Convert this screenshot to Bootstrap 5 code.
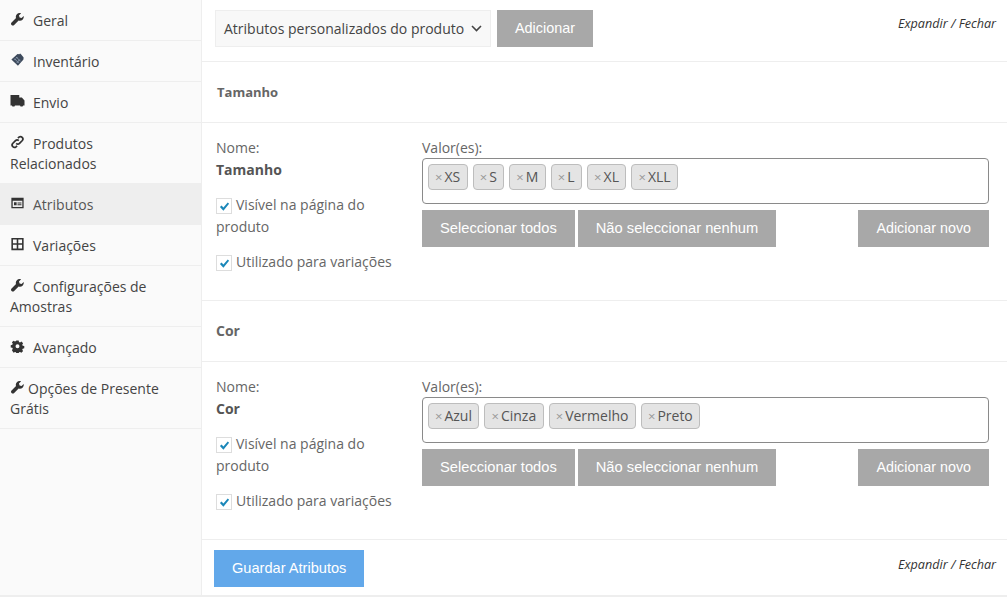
<!DOCTYPE html>
<html lang="pt">
<head>
<meta charset="utf-8">
<title>Atributos</title>
<link href="https://cdn.jsdelivr.net/npm/bootstrap@5.3.0/dist/css/bootstrap.min.css" rel="stylesheet">
<style>
html,body{height:100%;overflow:hidden}
body{font-family:"Open Sans",sans-serif;font-size:14px;line-height:20px;color:#555;background:#fff}
.shell{width:1007px;height:597px;border-bottom:2px solid #eee}
.side{width:202px;flex:none;background:#fafafa;border-right:1px solid #eee;height:595px}
.side-item{display:block;padding:11px 10px 9px;border-bottom:1px solid #eee;color:#444;text-decoration:none;line-height:20px}
.side-item.on{background:#eee;color:#555;border-bottom-color:#eee}
.side-item svg{width:15px;height:14px;margin:0 4px 0 0;vertical-align:0;fill:#333}
.side-item svg.wr{width:13px;height:13px;margin:0 5px 0 1px}
.side-item svg.wr-tight{margin-right:4px}
.tgap{margin-right:4px}
.main{flex:1;min-width:0}
.toolbar{height:62px;border-bottom:1px solid #eee;padding:10px 11px 0 13px}
.fake-select{width:276px;height:37px;background:#f8f8f8;border:1px solid #eee;padding:0 8px;color:#444;line-height:36px;margin-right:6px;font-size:14px}
.grey-btn,.blue-btn{border:0;border-radius:0;font-family:"Liberation Sans",sans-serif;font-size:14.6px;color:#fff;height:37px;padding:0 18px;line-height:37px}
.grey-btn{background:#a8a8a8}
.blue-btn{background:#62a8ea}
.grey-btn:hover{background:#a8a8a8;color:#fff}
.blue-btn:hover{background:#62a8ea;color:#fff}
.grey-btn.txt-add{font-size:14.4px}
.grey-btn.txt-sel{font-size:14.7px}
.grey-btn.txt-new{font-size:14.3px}
.exp{font-size:12.6px;font-style:italic;color:#333;line-height:16px;margin-top:6px}
.exp.low{margin-top:7px}
.attr-head{height:61px;border-bottom:1px solid #eee;padding:0 14px;font-size:13px;font-weight:700;color:#666;display:flex;align-items:center}
.attr-head.first{padding-left:15px}
.attr-head.wide{font-size:14px}
.attr-body{height:178px;border-bottom:1px solid #eee;padding:14px 18px 0 14px;background:#fff}
.left-col{width:206px;flex:none;padding-right:22px}
.right-col{flex:1;min-width:0}
.lbl{line-height:22px;display:block;color:#666}
.nm{font-weight:700;color:#555;line-height:22px;margin-bottom:13px}
.chk{line-height:22px;color:#666;margin-bottom:13px;white-space:nowrap}
.box{display:inline-block;width:16px;height:16px;border:1px solid #ddd;background:#fff;vertical-align:-4px;margin-right:4px;position:relative}
.box svg{position:absolute;left:2px;top:2px;width:11px;height:11px;fill:#1a87b9}
.vals{height:46px;border:1px solid #8a8a8a;border-radius:4px;padding:5px;margin-top:-1px;margin-bottom:6px;gap:5px}
.tagx{height:26px;background:#e4e4e4;border:1px solid #bdbdbd;border-radius:4px;padding:0 6.5px 0 6px;line-height:24px;color:#555;white-space:nowrap}
.tagx i{font-style:normal;color:#999;font-size:13px;margin-right:2px}
.btn-row{gap:3px}
.bottom{height:56px;padding:10px 11px 0 12px}
</style>
</head>
<body>
<div class="shell d-flex">
  <nav class="side">
    <a class="side-item" href="#"><svg class="wr" viewBox="0 0 16 16"><path d="M15.600 3.600 13 6.200l-2.400-.8-.8-2.400L12.400.4C10.600-.300 8.500.100 7.200 1.400 5.900 2.700 5.600 4.500 6.200 6.100L.7 11.600c-.9.900-.9 2.300 0 3.200.9.900 2.300.9 3.200 0l5.500-5.500c1.600.6 3.500.3 4.800-1 1.300-1.300 1.700-3.100 1.400-4.700z"/></svg><span class="tgap"></span>Geral</a>
    <a class="side-item" href="#"><svg viewBox="0 0 16 16"><path d="M1 7.500 8 1l2 .3 1-.8 1 1 3 3.500-.2 2.500L8.500 14.500z" fill="#3d4a5c"/><path d="M4.500 6.500l5 5M6.500 4.500l5 5M9 9.500l-2 2M10.500 7.500l-2 2M6 6.500l-1.500 1.500M8 4.500 6.500 6" stroke="#9fb0c4" stroke-width=".8" fill="none"/></svg><span class="tgap"></span>Inventário</a>
    <a class="side-item" href="#"><svg viewBox="0 0 16 16"><path d="M0 1h10v3h3l3 3.500V13h-1.600a1.800 1.800 0 0 1-3.500 0H5.100a1.800 1.800 0 0 1-3.500 0H0z"/></svg><span class="tgap"></span>Envio</a>
    <a class="side-item" href="#"><svg viewBox="0 0 16 16"><path d="M6.500 9.500a2.700 2.700 0 0 0 3.800 0l3.200-3.200a2.700 2.700 0 0 0-3.800-3.800L8.500 3.700M9.500 6.500a2.700 2.700 0 0 0-3.800 0L2.500 9.700a2.700 2.700 0 0 0 3.800 3.800l1.200-1.200" fill="none" stroke="#333" stroke-width="2"/></svg><span class="tgap"></span>Produtos<br>Relacionados</a>
    <a class="side-item on" href="#"><svg viewBox="0 0 16 16"><path d="M1 2h14v12H1zM2.500 5.500v7h11v-7zM4 7h3v3.500H4zM8 7.500h4.500v1H8zM8 9.500h4.500v1H8z" fill-rule="evenodd"/></svg><span class="tgap"></span>Atributos</a>
    <a class="side-item" href="#"><svg viewBox="0 0 16 16"><path d="M1 1h14v14H1zM2.800 2.800v4.300h4.300V2.800zm6.100 0v4.300h4.300V2.800zM2.800 8.900v4.300h4.300V8.900zm6.100 0v4.300h4.300V8.900z" fill-rule="evenodd"/></svg><span class="tgap"></span>Variações</a>
    <a class="side-item" href="#"><svg class="wr" viewBox="0 0 16 16"><path d="M15.600 3.600 13 6.200l-2.400-.8-.8-2.400L12.400.4C10.600-.300 8.500.100 7.200 1.400 5.900 2.700 5.600 4.500 6.200 6.100L.7 11.600c-.9.900-.9 2.300 0 3.200.9.900 2.300.9 3.200 0l5.500-5.500c1.600.6 3.500.3 4.800-1 1.300-1.300 1.700-3.100 1.400-4.700z"/></svg><span class="tgap"></span>Configurações de Amostras</a>
    <a class="side-item" href="#"><svg viewBox="0 0 16 16"><path d="M6.500 1h3l.4 2 1.300.6 1.800-1.100 2.100 2.100-1.100 1.800.6 1.300 2 .4v3l-2 .4-.6 1.300 1.100 1.800-2.100 2.100-1.800-1.100-1.300.6-.4 2h-3l-.4-2-1.300-.6-1.800 1.100L.9 13.500 2 11.700l-.6-1.300-2-.4v-3l2-.4.6-1.300L.9 3.500 3 1.400l1.800 1.100 1.300-.6zM8 6a2.500 2.500 0 1 0 0 5 2.500 2.500 0 0 0 0-5z" fill-rule="evenodd" transform="translate(.8 .7) scale(.9)"/></svg><span class="tgap"></span>Avançado</a>
    <a class="side-item" href="#"><svg class="wr wr-tight" viewBox="0 0 16 16"><path d="M15.600 3.600 13 6.200l-2.400-.8-.8-2.400L12.400.4C10.600-.300 8.500.100 7.200 1.400 5.900 2.700 5.600 4.500 6.200 6.100L.7 11.600c-.9.900-.9 2.300 0 3.200.9.900 2.300.9 3.200 0l5.500-5.500c1.600.6 3.500.3 4.800-1 1.300-1.300 1.700-3.100 1.400-4.700z"/></svg>Opções de Presente Grátis</a>
  </nav>
  <main class="main">
    <div class="toolbar d-flex align-items-start">
      <div class="fake-select d-flex justify-content-between align-items-center"><span>Atributos personalizados do produto</span><svg width="11" height="7" viewBox="0 0 11 7"><path d="M1 1l4.500 4.500L10 1" fill="none" stroke="#444" stroke-width="1.600"/></svg></div>
      <button class="btn grey-btn txt-add" type="button">Adicionar</button>
      <div class="exp ms-auto">Expandir / Fechar</div>
    </div>

    <div class="attr-head first">Tamanho</div>
    <div class="attr-body d-flex">
      <div class="left-col">
        <span class="lbl">Nome:</span>
        <div class="nm">Tamanho</div>
        <div class="chk"><span class="box"><svg viewBox="0 0 12 12"><path d="M1 6.500 2.800 4.800 4.800 7 9.500 1.500 11 3 4.800 10.500z"/></svg></span>Visível na página do<br>produto</div>
        <div class="chk"><span class="box"><svg viewBox="0 0 12 12"><path d="M1 6.500 2.800 4.800 4.800 7 9.500 1.500 11 3 4.800 10.500z"/></svg></span>Utilizado para variações</div>
      </div>
      <div class="right-col">
        <span class="lbl">Valor(es):</span>
        <div class="vals d-flex align-items-start">
          <span class="tagx"><i>×</i>XS</span><span class="tagx"><i>×</i>S</span><span class="tagx"><i>×</i>M</span><span class="tagx"><i>×</i>L</span><span class="tagx"><i>×</i>XL</span><span class="tagx"><i>×</i>XLL</span>
        </div>
        <div class="d-flex btn-row">
          <button class="btn grey-btn txt-sel" type="button">Seleccionar todos</button>
          <button class="btn grey-btn txt-sel" type="button">Não seleccionar nenhum</button>
          <button class="btn grey-btn txt-new ms-auto" type="button">Adicionar novo</button>
        </div>
      </div>
    </div>

    <div class="attr-head wide">Cor</div>
    <div class="attr-body d-flex">
      <div class="left-col">
        <span class="lbl">Nome:</span>
        <div class="nm">Cor</div>
        <div class="chk"><span class="box"><svg viewBox="0 0 12 12"><path d="M1 6.500 2.800 4.800 4.800 7 9.500 1.500 11 3 4.800 10.500z"/></svg></span>Visível na página do<br>produto</div>
        <div class="chk"><span class="box"><svg viewBox="0 0 12 12"><path d="M1 6.500 2.800 4.800 4.800 7 9.500 1.500 11 3 4.800 10.500z"/></svg></span>Utilizado para variações</div>
      </div>
      <div class="right-col">
        <span class="lbl">Valor(es):</span>
        <div class="vals d-flex align-items-start">
          <span class="tagx"><i>×</i>Azul</span><span class="tagx"><i>×</i>Cinza</span><span class="tagx"><i>×</i>Vermelho</span><span class="tagx"><i>×</i>Preto</span>
        </div>
        <div class="d-flex btn-row">
          <button class="btn grey-btn txt-sel" type="button">Seleccionar todos</button>
          <button class="btn grey-btn txt-sel" type="button">Não seleccionar nenhum</button>
          <button class="btn grey-btn txt-new ms-auto" type="button">Adicionar novo</button>
        </div>
      </div>
    </div>

    <div class="bottom d-flex align-items-start">
      <button class="btn blue-btn" type="button">Guardar Atributos</button>
      <div class="exp low ms-auto">Expandir / Fechar</div>
    </div>
  </main>
</div>
<script src="https://cdn.jsdelivr.net/npm/bootstrap@5.3.0/dist/js/bootstrap.bundle.min.js"></script>
</body>
</html>
